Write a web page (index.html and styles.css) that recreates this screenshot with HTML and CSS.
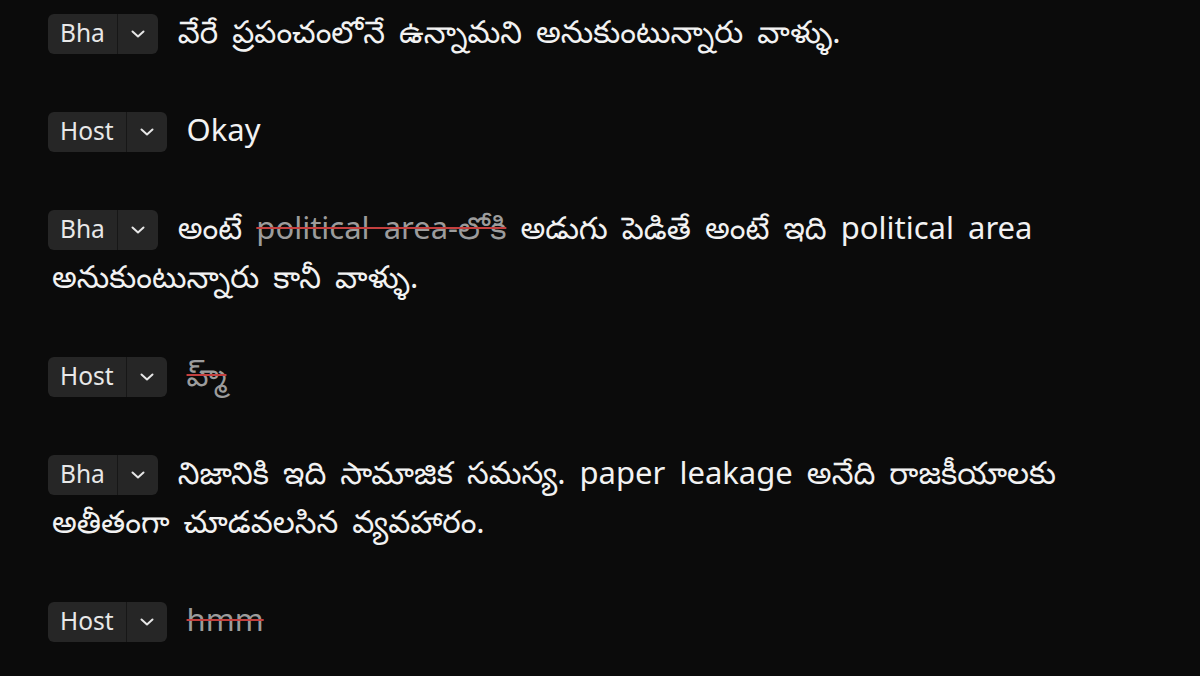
FILE: index.html
```html
<!DOCTYPE html>
<html lang="te">
<head>
<meta charset="utf-8">
<title>Transcript</title>
<link rel="stylesheet" href="styles.css">
</head>
<body>
<main class="transcript">
  <p class="utt"><span class="spk"><span class="spk-name">Bha</span><span class="spk-btn"><svg viewBox="0 0 14 8" class="chev"><path d="M1.5 1.5 L7 6.5 L12.5 1.5"/></svg></span></span><span class="txt">వేరే ప్రపంచంలోనే ఉన్నామని అనుకుంటున్నారు వాళ్ళు.</span></p>
  <p class="utt"><span class="spk"><span class="spk-name">Host</span><span class="spk-btn"><svg viewBox="0 0 14 8" class="chev"><path d="M1.5 1.5 L7 6.5 L12.5 1.5"/></svg></span></span><span class="txt">Okay</span></p>
  <p class="utt"><span class="spk"><span class="spk-name">Bha</span><span class="spk-btn"><svg viewBox="0 0 14 8" class="chev"><path d="M1.5 1.5 L7 6.5 L12.5 1.5"/></svg></span></span><span class="txt">అంటే <del class="del">political area-లోకి</del> అడుగు పెడితే అంటే ఇది political area అనుకుంటున్నారు కానీ వాళ్ళు.</span></p>
  <p class="utt"><span class="spk"><span class="spk-name">Host</span><span class="spk-btn"><svg viewBox="0 0 14 8" class="chev"><path d="M1.5 1.5 L7 6.5 L12.5 1.5"/></svg></span></span><span class="txt"><del class="del">హ్మ్</del></span></p>
  <p class="utt"><span class="spk"><span class="spk-name">Bha</span><span class="spk-btn"><svg viewBox="0 0 14 8" class="chev"><path d="M1.5 1.5 L7 6.5 L12.5 1.5"/></svg></span></span><span class="txt">నిజానికి ఇది సామాజిక సమస్య. paper leakage అనేది రాజకీయాలకు అతీతంగా చూడవలసిన వ్యవహారం.</span></p>
  <p class="utt"><span class="spk"><span class="spk-name">Host</span><span class="spk-btn"><svg viewBox="0 0 14 8" class="chev"><path d="M1.5 1.5 L7 6.5 L12.5 1.5"/></svg></span></span><span class="txt"><del class="del">hmm</del></span></p>
</main>
</body>
</html>
```
FILE: styles.css
```css
html, body {
  margin: 0;
  padding: 0;
  background: #0b0b0b;
}
body {
  font-family: "Noto Sans", "Noto Sans Telugu", sans-serif;
  color: #f2f2f2;
}
.transcript {
  padding: 7px 48px 0 48px;
}
.utt {
  margin: 0 0 49px 0;
  padding-left: 4px;
  text-indent: -4px;
  font-size: 31px;
  line-height: 49px;
  word-spacing: 6px;
}
.spk {
  display: inline-flex;
  align-items: stretch;
  height: 40px;
  vertical-align: middle;
  position: relative;
  top: -1px;
  background: #262626;
  border-radius: 6px;
  margin-right: 20px;
  overflow: hidden;
  word-spacing: 0;
  text-indent: 0;
}
.spk-name {
  display: flex;
  align-items: center;
  padding: 0 12px 0 12px;
  font-size: 24.5px;
  line-height: 1;
  color: #e8e8e8;
  border-right: 1px solid #171717;
}
.spk-btn {
  display: flex;
  align-items: center;
  justify-content: center;
  width: 40px;
}
.chev {
  width: 14px;
  height: 8px;
  fill: none;
  stroke: #e6e6e6;
  stroke-width: 2;
  stroke-linecap: round;
  stroke-linejoin: round;
}
.del {
  color: #9c9c9c;
  text-decoration: line-through;
  text-decoration-color: #c4403f;
  text-decoration-thickness: 2px;
}
```
